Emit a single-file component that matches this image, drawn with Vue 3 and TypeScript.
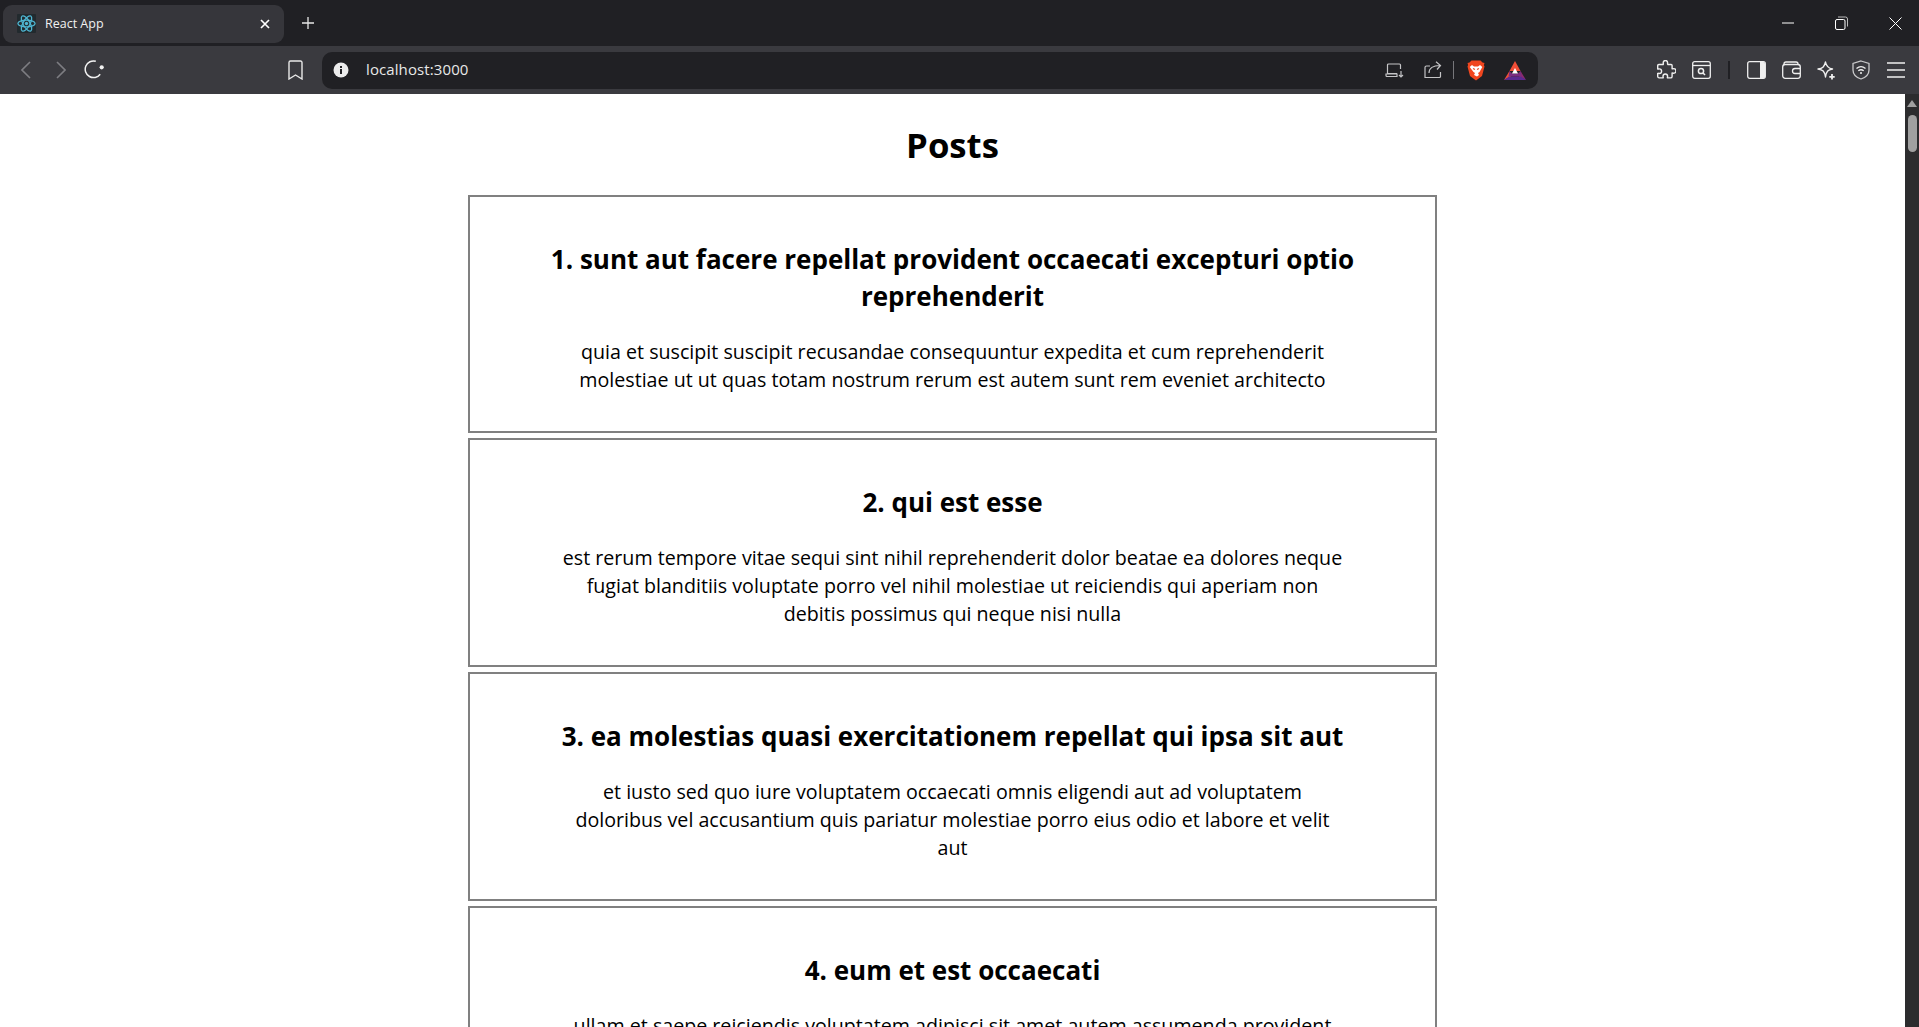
<template>
  <div class="browser">
    <div class="tabstrip">
      <div class="tab">
        <svg class="favicon" width="19" height="19" viewBox="0 0 19 19">
          <rect width="19" height="19" rx="1" fill="#222a2e" />
          <g fill="none" stroke="#4fb6d2" stroke-width="1.3">
            <ellipse cx="9.5" cy="9.5" rx="8.6" ry="3.4" />
            <ellipse cx="9.5" cy="9.5" rx="8.6" ry="3.4" transform="rotate(60 9.5 9.5)" />
            <ellipse cx="9.5" cy="9.5" rx="8.6" ry="3.4" transform="rotate(120 9.5 9.5)" />
          </g>
          <circle cx="9.5" cy="9.5" r="1.7" fill="#4fb6d2" />
        </svg>
        <span class="tab-title">React App</span>
        <svg class="tab-close" width="10" height="10" viewBox="0 0 10 10">
          <path d="M1 1l8 8M9 1l-8 8" stroke="#fff" stroke-width="1.7" fill="none" />
        </svg>
      </div>
      <svg class="new-tab" width="14" height="14" viewBox="0 0 14 14">
        <path d="M7 1v12M1 7h12" stroke="#e6e6e6" stroke-width="1.3" fill="none" />
      </svg>
      <div class="win-controls">
        <button class="win-btn">
          <svg width="12" height="12" viewBox="0 0 12 12"><path d="M0 6h12" stroke="#fff" stroke-width="1" fill="none" /></svg>
        </button>
        <button class="win-btn">
          <svg width="13" height="14" viewBox="0 0 13 14" fill="none" stroke="#fff" stroke-width="1">
            <rect x=".5" y="3.5" width="9.5" height="10" rx="1.5" />
            <path d="M3 1h7.5a2 2 0 0 1 2 2v7.5" stroke="#bbb" />
          </svg>
        </button>
        <button class="win-btn">
          <svg width="13" height="13" viewBox="0 0 13 13"><path d="M.5.5l12 12M12.5.5l-12 12" stroke="#fff" stroke-width="1" fill="none" /></svg>
        </button>
      </div>
    </div>

    <div class="toolbar">
      <div class="nav">
        <button class="tool-btn">
          <svg width="11" height="18" viewBox="0 0 11 18"><path d="M9 1L1 9l8 8" stroke="#7d7d82" stroke-width="1.6" fill="none" /></svg>
        </button>
        <button class="tool-btn">
          <svg width="11" height="18" viewBox="0 0 11 18"><path d="M2 1l8 8-8 8" stroke="#7d7d82" stroke-width="1.6" fill="none" /></svg>
        </button>
        <button class="tool-btn">
          <svg width="20" height="20" viewBox="0 0 20 20">
            <path d="M16.2 14.2A8.3 8.3 0 1 1 11.8 1.3" stroke="#f2f2f2" stroke-width="1.5" fill="none" />
            <circle cx="17.700" cy="7.300" r="2.100" fill="#f2f2f2" />
          </svg>
        </button>
      </div>
      <button class="tool-btn bookmark">
        <svg width="15" height="20" viewBox="0 0 15 20"><path d="M2.5 1h10A1.5 1.5 0 0 1 14 2.500V19l-6.500-4L1 19V2.500A1.500 1.500 0 0 1 2.500 1z" stroke="#e8e8e8" stroke-width="1.400" fill="none" /></svg>
      </button>

      <div class="urlbar">
        <svg class="info" width="16" height="16" viewBox="0 0 16 16">
          <circle cx="8" cy="8" r="7.500" fill="#ececec" />
          <rect x="7" y="7" width="2" height="5" fill="#202024" />
          <rect x="7" y="4" width="2" height="2" fill="#202024" />
        </svg>
        <span class="url">localhost:3000</span>
        <div class="url-actions">
          <svg width="19" height="15" viewBox="0 0 19 15" fill="none" stroke="#c4c4c6" stroke-width="1.200">
            <path d="M12 10.500H2.500V2a1 1 0 0 1 1-1h11a1 1 0 0 1 1 1v4" />
            <path d="M1 11h11v2.500H2A1 1 0 0 1 1 12.500z" />
            <path d="M16 8v6M14 12l2 2 2-2" />
          </svg>
          <svg class="share" width="18" height="18" viewBox="0 0 18 18" fill="none" stroke="#c4c4c6" stroke-width="1.200">
            <path d="M6 5H2.500A1.500 1.500 0 0 0 1 6.500v10h14.500a1.500 1.500 0 0 0 1-1V11" />
            <path d="M5 12c0-5 4-7.500 11-7.500M12 .8l4.500 3.700L13 8.500" />
          </svg>
          <span class="url-sep"></span>
          <svg class="lion" width="18" height="21" viewBox="0 0 18 21">
            <path d="M4.500.5h9L15.500 2.500l2 .5-.6 2 .6 1.500L15 16l-6 4.500L3 16 .5 6.500 1.100 5 .5 3l2-.5z" fill="#f0461f" />
            <path d="M5 5l2 1.500h4L13 5l2.300 2-2.800 5-1.500 1 1 2-2 1.500L7 15l1-2-1.500-1-3.800-5z" fill="#fff" />
            <path d="M6 8.500l2 1M12 8.500l-2 1" stroke="#f0461f" stroke-width="1.200" />
          </svg>
          <svg class="bat" width="22" height="19" viewBox="0 0 22 19">
            <path d="M11 0l5.500 10h-11z" fill="#f04e37" />
            <path d="M5.500 10L0 19l7-3.500z" fill="#f04e37" />
            <path d="M16.500 10L22 19l-7-3.500z" fill="#8a2a6e" />
            <path d="M0 19h22l-5-3.500H5z" fill="#5a2a90" />
            <path d="M5.500 10L8 12.500h6l2.500-2.500 1 5.500H4.500z" fill="#7a2c80" />
            <path d="M11 7l3 5.500H8z" fill="#fff" />
          </svg>
        </div>
      </div>

      <div class="right-tools">
        <button class="tool-btn">
          <svg width="20" height="20" viewBox="0 0 20 20"><path d="M7.500 2.500a2.200 2.200 0 0 1 4.400 0c0 1-.3 1.500.2 1.800h3.300a1 1 0 0 1 1 1v3.200c.4.500 1-.1 1.600-.1a2.300 2.300 0 0 1 0 4.600c-.6 0-1.200-.5-1.600-.1v3.300a1.500 1.500 0 0 1-1.500 1.500h-3.100c-.4-.4.100-1 .1-1.600a2.300 2.300 0 0 0-4.600 0c0 .6.500 1.200.1 1.600H3.500A1.500 1.500 0 0 1 2 16.300v-3.100c.4-.4 1 .1 1.600.1a2.300 2.300 0 0 0 0-4.600c-.6 0-1.200.5-1.600.1V5.500a1.200 1.200 0 0 1 1.200-1.200h4.300c.4-.4 0-1 0-1.800z" transform="translate(-.3 .2)" stroke="#efefef" stroke-width="1.400" fill="none" /></svg>
        </button>
        <button class="tool-btn">
          <svg width="19" height="18" viewBox="0 0 19 18" fill="none" stroke="#efefef" stroke-width="1.300">
            <rect x=".7" y=".7" width="17.600" height="16.600" rx="2" />
            <path d="M1 4.500h17" />
            <circle cx="9" cy="10" r="2.600" stroke-width="1.500" />
            <path d="M11 12l2 2" stroke-width="1.600" />
          </svg>
        </button>
        <span class="tool-sep"></span>
        <button class="tool-btn">
          <svg width="19" height="18" viewBox="0 0 19 18">
            <rect x=".7" y=".7" width="17.600" height="16.600" rx="2" fill="none" stroke="#efefef" stroke-width="1.300" />
            <path d="M13 1h3.500A1.500 1.500 0 0 1 18 2.500v13a1.500 1.500 0 0 1-1.500 1.500H13z" fill="#efefef" />
          </svg>
        </button>
        <button class="tool-btn">
          <svg width="19" height="18" viewBox="0 0 19 18" fill="none" stroke="#efefef" stroke-width="1.300">
            <path d="M2 4V3a2 2 0 0 1 2-2h10a2 2 0 0 1 2 2v1" />
            <rect x=".7" y="3.500" width="17.600" height="13.800" rx="2.500" />
            <path d="M18 7.500h-5a2.500 2.500 0 0 0 0 5h5" />
          </svg>
        </button>
        <button class="tool-btn">
          <svg width="19" height="19" viewBox="0 0 19 19" fill="none" stroke="#efefef" stroke-width="1.400">
            <path d="M8.500 1c.8 4.500 2.500 6.200 7 7-4.500.9-6 2-7 8-1-6-2.600-7.200-7.500-8 4.900-.8 6.500-2.500 7.500-7z" stroke-linejoin="round" />
            <path d="M15 13v5.500M12.300 15.800h5.400" stroke-width="1.800" />
          </svg>
        </button>
        <button class="tool-btn">
          <svg width="18" height="20" viewBox="0 0 18 20" fill="none" stroke="#c9c9cb" stroke-width="1.300">
            <path d="M9 1l8 2.500V10c0 4.500-3.500 7.500-8 9-4.500-1.500-8-4.500-8-9V3.500z" />
            <path d="M4.500 8.500c2.700-2.200 6.300-2.200 9 0M6.300 10.700c1.700-1.200 3.700-1.200 5.400 0" stroke="#efefef" />
            <circle cx="9" cy="13" r="1" fill="#efefef" stroke="none" />
          </svg>
        </button>
        <button class="tool-btn">
          <svg width="18" height="16" viewBox="0 0 18 16"><path d="M0 1h18M0 8h18M0 15h18" stroke="#efefef" stroke-width="1.300" fill="none" /></svg>
        </button>
      </div>
    </div>

    <div class="viewport">
      <main class="page">
        <h1 class="heading">Posts</h1>
        <article v-for="post in posts" :key="post.id" class="post">
          <h2 class="post-title">{{ post.id }}. {{ post.title }}</h2>
          <p class="post-body">{{ post.body }}</p>
        </article>
      </main>
      <div class="scrollbar">
        <span class="scroll-up"></span>
        <span class="scroll-thumb"></span>
      </div>
    </div>
  </div>
</template>

<script setup lang="ts">
type Post = {
  id: number;
  title: string;
  body: string;
};

const posts: Post[] = [
  {
    id: 1,
    title: "sunt aut facere repellat provident occaecati excepturi optio reprehenderit",
    body: "quia et suscipit suscipit recusandae consequuntur expedita et cum reprehenderit molestiae ut ut quas totam nostrum rerum est autem sunt rem eveniet architecto",
  },
  {
    id: 2,
    title: "qui est esse",
    body: "est rerum tempore vitae sequi sint nihil reprehenderit dolor beatae ea dolores neque fugiat blanditiis voluptate porro vel nihil molestiae ut reiciendis qui aperiam non debitis possimus qui neque nisi nulla",
  },
  {
    id: 3,
    title: "ea molestias quasi exercitationem repellat qui ipsa sit aut",
    body: "et iusto sed quo iure voluptatem occaecati omnis eligendi aut ad voluptatem doloribus vel accusantium quis pariatur molestiae porro eius odio et labore et velit aut",
  },
  {
    id: 4,
    title: "eum et est occaecati",
    body: "ullam et saepe reiciendis voluptatem adipisci sit amet autem assumenda provident rerum culpa quis hic commodi nesciunt rem tenetur doloremque ipsam iure quis sunt voluptatem rerum illo velit",
  },
];
</script>

<style scoped>
.browser {
  height: 100vh;
  display: flex;
  flex-direction: column;
  overflow: hidden;
  font-family: "Open Sans", "Noto Sans", sans-serif;
}

button {
  border: 0;
  padding: 0;
  background: none;
  display: flex;
  align-items: center;
  justify-content: center;
}

.tabstrip {
  height: 46px;
  flex: none;
  display: flex;
  align-items: center;
  background: #202024;
  padding-left: 3px;
}

.tab {
  width: 281px;
  height: 38px;
  margin-top: 1px;
  display: flex;
  align-items: center;
  padding: 0 14px;
  box-sizing: border-box;
  border-radius: 9px;
  background: #36363b;
}

.favicon {
  flex: none;
}

.tab-title {
  margin-left: 9px;
  font-size: 12.5px;
  color: #f0f0f0;
}

.tab-close {
  margin-left: auto;
}

.new-tab {
  margin-left: 17px;
}

.win-controls {
  margin-left: auto;
  display: flex;
  gap: 5.5px;
}

.win-btn {
  width: 48px;
  height: 46px;
}

.toolbar {
  height: 48px;
  flex: none;
  display: flex;
  align-items: center;
  background: #3a3a3f;
}

.nav {
  display: flex;
  padding-left: 9px;
}

.tool-btn {
  width: 35px;
  height: 36px;
  flex: none;
}

.nav .tool-btn {
  width: 34px;
}

.bookmark {
  margin-left: 167px;
}

.urlbar {
  width: 1216px;
  height: 37px;
  margin-left: 9px;
  display: flex;
  align-items: center;
  padding-left: 10.5px;
  box-sizing: border-box;
  border-radius: 10px;
  background: #202024;
}

.url {
  margin-left: 17.5px;
  font-size: 15px;
  letter-spacing: 0.1px;
  line-height: 19px;
  padding-bottom: 1px;
  color: #e8e8e8;
}

.url-actions {
  margin-left: auto;
  display: flex;
  align-items: center;
  padding-right: 12px;
}

.share {
  margin-left: 20px;
}

.url-sep {
  width: 1px;
  height: 18px;
  margin-left: 11px;
  background: #77777b;
}

.lion {
  margin-left: 13px;
}

.bat {
  margin-left: 19px;
}

.right-tools {
  margin-left: auto;
  display: flex;
  align-items: center;
  padding-right: 5.5px;
}

.tool-sep {
  width: 2px;
  height: 18px;
  margin: 0 9px;
  background: #202024;
}

.viewport {
  flex: 1;
  min-height: 0;
  display: flex;
  background: #fff;
}

.page {
  flex: 1;
  min-width: 0;
  height: 100%;
  padding-top: 26px;
  box-sizing: border-box;
  overflow: hidden;
  display: flex;
  flex-direction: column;
  align-items: center;
  gap: 5px;
  color: #000;
  text-align: center;
}

.heading {
  height: 50px;
  margin: 0 0 20px;
  font-size: 34.7px;
  font-weight: 700;
  line-height: 50px;
}

.post {
  width: 969px;
  flex: none;
  padding: 44px 78px 37px;
  box-sizing: border-box;
  border: 2px solid #808080;
}

.post-title {
  margin: 0 0 23px;
  font-size: 26px;
  font-weight: 700;
  line-height: 37px;
}

.post-body {
  max-width: 781px;
  margin: 0 auto;
  font-size: 19.65px;
  line-height: 28px;
}

.scrollbar {
  width: 14px;
  flex: none;
  display: flex;
  flex-direction: column;
  align-items: center;
  background: #2c2c2e;
}

.scroll-up {
  margin-top: 6px;
  width: 0;
  height: 0;
  border-left: 5px solid transparent;
  border-right: 5px solid transparent;
  border-bottom: 7px solid #a0a0a0;
}

.scroll-thumb {
  margin-top: 8px;
  margin-left: 1px;
  width: 9px;
  height: 37px;
  border-radius: 5px;
  background: #a0a0a0;
}
</style>
